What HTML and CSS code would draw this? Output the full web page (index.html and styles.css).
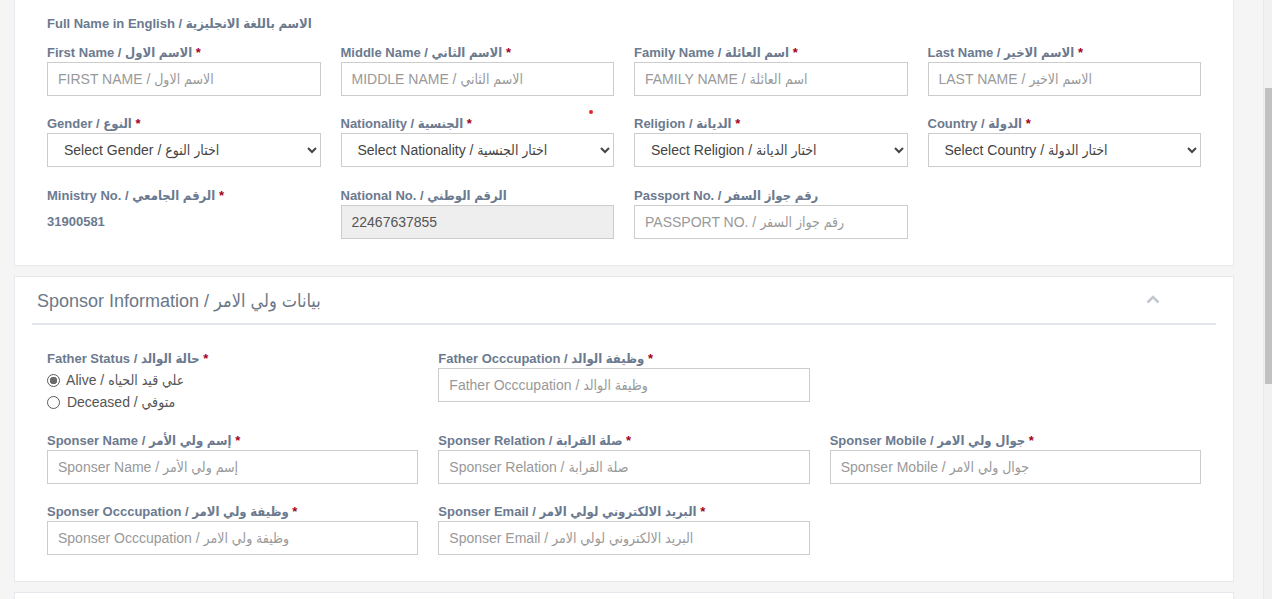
FILE: index.html
```html
<!DOCTYPE html>
<html lang="en">
<head>
<meta charset="utf-8">
<title>Student Form</title>
<link rel="stylesheet" href="styles.css">
</head>
<body>
<div class="page">
  <main class="content">
    <section class="card card-top">
      <span class="stray-dot"></span>
      <div class="card-body card-body-top">
        <div class="group-title">Full Name in English / الاسم باللغة الانجليزية</div>
        <div class="grid grid-4">
          <div class="field">
            <label class="label">First Name / الاسم الاول <span class="req">*</span></label>
            <input class="control" type="text" placeholder="FIRST NAME / الاسم الاول">
          </div>
          <div class="field">
            <label class="label">Middle Name / الاسم الثاني <span class="req">*</span></label>
            <input class="control" type="text" placeholder="MIDDLE NAME / الاسم الثاني">
          </div>
          <div class="field">
            <label class="label">Family Name / اسم العائلة <span class="req">*</span></label>
            <input class="control" type="text" placeholder="FAMILY NAME / اسم العائلة">
          </div>
          <div class="field">
            <label class="label">Last Name / الاسم الاخير <span class="req">*</span></label>
            <input class="control" type="text" placeholder="LAST NAME / الاسم الاخير">
          </div>

          <div class="field">
            <label class="label">Gender / النوع <span class="req">*</span></label>
            <select class="control select"><option>Select Gender / اختار النوع</option></select>
          </div>
          <div class="field">
            <label class="label">Nationality / الجنسية <span class="req">*</span></label>
            <select class="control select"><option>Select Nationality / اختار الجنسية</option></select>
          </div>
          <div class="field">
            <label class="label">Religion / الديانة <span class="req">*</span></label>
            <select class="control select"><option>Select Religion / اختار الديانة</option></select>
          </div>
          <div class="field">
            <label class="label">Country / الدولة <span class="req">*</span></label>
            <select class="control select"><option>Select Country / اختار الدولة</option></select>
          </div>

          <div class="field field-shift">
            <label class="label">Ministry No. / الرقم الجامعي <span class="req">*</span></label>
            <div class="static-value">31900581</div>
          </div>
          <div class="field field-shift">
            <label class="label">National No. / الرقم الوطني</label>
            <input class="control" type="text" value="22467637855" disabled>
          </div>
          <div class="field field-shift">
            <label class="label">Passport No. / رقم جواز السفر</label>
            <input class="control" type="text" placeholder="PASSPORT NO. / رقم جواز السفر">
          </div>
        </div>
      </div>
    </section>

    <section class="card">
      <header class="card-header">
        <h2 class="card-title">Sponsor Information / بيانات ولي الامر</h2>
        <svg class="chevron" width="14" height="9" viewBox="0 0 14 9" aria-hidden="true">
          <polyline points="1.5,7.5 7,2 12.5,7.5" fill="none" stroke="#c3c7ce" stroke-width="2.6"/>
        </svg>
      </header>
      <div class="card-body card-body-sponsor">
        <div class="grid grid-3">
          <div class="field">
            <label class="label">Father Status / حالة الوالد <span class="req">*</span></label>
            <div class="radio-group">
              <label class="radio"><input type="radio" name="fstatus" checked> Alive / علي قيد الحياه</label>
              <label class="radio"><input type="radio" name="fstatus"> Deceased / متوفي</label>
            </div>
          </div>
          <div class="field">
            <label class="label">Father Occcupation / وظيفة الوالد <span class="req">*</span></label>
            <input class="control" type="text" placeholder="Father Occcupation / وظيفة الوالد">
          </div>
          <div class="field"></div>

          <div class="field">
            <label class="label">Sponser Name / إسم ولي الأمر <span class="req">*</span></label>
            <input class="control" type="text" placeholder="Sponser Name / إسم ولي الأمر">
          </div>
          <div class="field">
            <label class="label">Sponser Relation / صلة القرابة <span class="req">*</span></label>
            <input class="control" type="text" placeholder="Sponser Relation / صلة القرابة">
          </div>
          <div class="field">
            <label class="label">Sponser Mobile / جوال ولي الامر <span class="req">*</span></label>
            <input class="control" type="text" placeholder="Sponser Mobile / جوال ولي الامر">
          </div>

          <div class="field">
            <label class="label">Sponser Occcupation / وظيفة ولي الامر <span class="req">*</span></label>
            <input class="control" type="text" placeholder="Sponser Occcupation / وظيفة ولي الامر">
          </div>
          <div class="field">
            <label class="label">Sponser Email / البريد الالكتروني لولي الامر <span class="req">*</span></label>
            <input class="control" type="text" placeholder="Sponser Email / البريد الالكتروني لولي الامر">
          </div>
        </div>
      </div>
    </section>

    <section class="card card-stub"></section>
  </main>
  <aside class="scrollbar"><div class="thumb"></div></aside>
</div>
</body>
</html>
```

FILE: styles.css
```css
html, body {
  margin: 0;
  padding: 0;
}

body {
  background: #f5f5f5;
  font-family: "Liberation Sans", "DejaVu Sans Condensed", Arial, sans-serif;
  color: #555;
}

.page {
  display: flex;
  height: 599px;
  overflow: hidden;
}

.content {
  flex: 1;
  padding: 0 29px 0 14px;
}

.scrollbar {
  width: 8px;
  background: #f1f1f1;
  border-left: 1px solid #e9e9e9;
  display: flex;
  justify-content: flex-end;
}

.thumb {
  width: 7px;
  height: 296px;
  margin-top: 88px;
  background: #c1c1c1;
}

.card {
  background: #fff;
  border: 1px solid #e6e8ed;
  margin-bottom: 10px;
}

.card-top {
  border-top: none;
  position: relative;
}

.stray-dot {
  position: absolute;
  left: 574px;
  top: 110px;
  width: 4px;
  height: 4px;
  border-radius: 50%;
  background: #e3262b;
}

.card-body {
  padding: 15px 32px 26px;
}

.card-body-top {
  padding-bottom: 26px;
}

.card-body-sponsor {
  padding-top: 24px;
}

.group-title {
  font-size: 13px;
  font-weight: bold;
  line-height: 18px;
  color: #6b7a8f;
  margin-bottom: 10px;
}

.grid {
  display: grid;
  column-gap: 20px;
  row-gap: 18px;
}

.grid-4 {
  grid-template-columns: repeat(4, 1fr);
}

.field-shift {
  padding-top: 1px;
}

.grid-3 {
  grid-template-columns: repeat(3, 1fr);
}

.label {
  display: block;
  font-size: 13px;
  font-weight: bold;
  line-height: 18px;
  padding-top: 1px;
  color: #6b7a8f;
  margin-bottom: 0;
}

.req {
  color: #a3001b;
}

.control {
  display: block;
  box-sizing: border-box;
  width: 100%;
  height: 34px;
  margin: 0;
  padding: 6px 10px;
  border: 1px solid #ccc;
  border-radius: 0;
  background: #fff;
  font-family: "Liberation Sans", "DejaVu Sans Condensed", Arial, sans-serif;
  font-size: 14px;
  color: #555;
  outline: none;
}

.control::placeholder {
  color: #999;
}

.control:disabled {
  background: #eee;
  color: #555;
}

.select {
  padding: 6px 12px;
  color: #444;
}

.static-value {
  font-size: 13px;
  font-weight: bold;
  line-height: 34px;
  color: #6b7a8f;
}

.radio-group {
  display: flex;
  flex-direction: column;
  padding-top: 1px;
}

.radio {
  display: flex;
  align-items: center;
  height: 22px;
  font-size: 14px;
  color: #555;
  white-space: pre;
}

.radio input {
  appearance: none;
  -webkit-appearance: none;
  box-sizing: border-box;
  width: 13px;
  height: 13px;
  margin: 0 3px 0 0;
  border: 1px solid #5b5b5b;
  border-radius: 50%;
  background: #fff;
}

.radio input:checked {
  background: radial-gradient(circle, #6a6a6a 0 3.5px, #fff 4px);
}

.card-header {
  display: flex;
  align-items: center;
  justify-content: space-between;
  margin: 0 17px;
  padding: 11px 0 9px 5px;
  border-bottom: 2px solid #e2e6ea;
}

.card-title {
  margin: 0;
  font-size: 18px;
  font-weight: normal;
  line-height: 26px;
  color: #6c7888;
}

.chevron {
  margin-right: 56px;
  margin-bottom: 3px;
}

.card-stub {
  height: 40px;
  margin-bottom: 0;
}
```
